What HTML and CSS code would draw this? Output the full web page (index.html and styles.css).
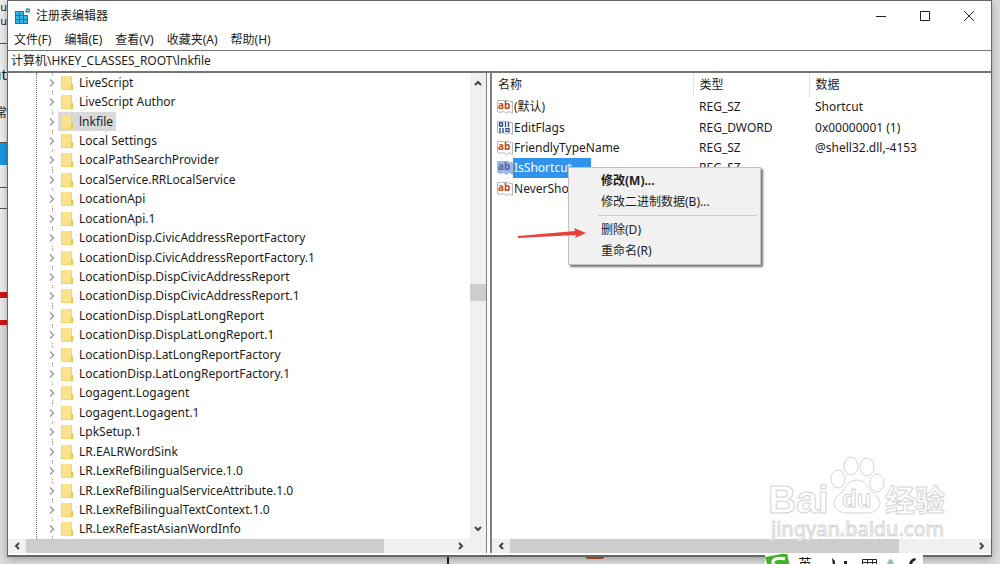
FILE: index.html
```html
<!DOCTYPE html>
<html lang="zh-CN">
<head>
    <meta charset="UTF-8">
    <meta name="viewport" content="width=device-width, initial-scale=1.0">
    <title>注册表编辑器</title>
    <link rel="stylesheet" href="styles.css">
</head>
<body>

    <!-- things that show behind the window -->
    <div class="behind" aria-hidden="true">
        <span class="scrap scrap-white"></span>
        <span class="scrap scrap-text scrap-a">gu<br>gu</span>
        <span class="scrap scrap-text scrap-b">ut</span>
        <span class="scrap scrap-text scrap-c">正常</span>
        <span class="scrap scrap-blue"></span>
        <span class="scrap scrap-box"></span>
        <span class="scrap scrap-red"></span>
        <span class="scrap scrap-line"></span>
        <span class="scrap scrap-orange"></span>
    </div>

    <main class="window">
        <header class="titlebar">
            <svg class="app-icon" width="16" height="16" viewBox="0 0 16 16">
                <path fill="#1478ac" d="M0 3h9v4h4v9H0z"/>
                <path fill="#35b4e8" d="M1 4h3v3H1zM5 4h3v3H5zM1 8h3v3H1zM5 8h3v3H5zM9 8h3v3H9zM1 12h3v3H1zM5 12h3v3H5zM9 12h3v3H9z"/>
                <path fill="#2a91bf" d="M12 0l3 1v3l-3 1-2-2z"/>
                <path fill="#d5f2fc" d="M12 2h2v1h-2z"/>
            </svg>
            <h1 class="title">注册表编辑器</h1>
            <div class="controls">
                <button type="button" aria-label="最小化"><svg width="12" height="12" viewBox="0 0 12 12"><path d="M1 6.5h10"/></svg></button>
                <button type="button" aria-label="最大化"><svg width="12" height="12" viewBox="0 0 12 12"><path d="M1.500 1.500h9v9h-9z"/></svg></button>
                <button type="button" aria-label="关闭"><svg width="12" height="12" viewBox="0 0 12 12"><path d="M1 1l10 10M11 1L1 11"/></svg></button>
            </div>
        </header>

        <nav class="menubar">
            <button type="button">文件(F)</button>
            <button type="button">编辑(E)</button>
            <button type="button">查看(V)</button>
            <button type="button">收藏夹(A)</button>
            <button type="button">帮助(H)</button>
        </nav>

        <input class="address" type="text" aria-label="地址" value="计算机\HKEY_CLASSES_ROOT\lnkfile">

        <div class="panes">
            <section class="pane tree-pane">
                <div class="pane-main">
                    <ul class="tree" id="tree"></ul>
                    <div class="vscroll">
                        <svg width="8" height="6" viewBox="0 0 8 6"><path d="M1 5l3-3 3 3"/></svg>
                        <div class="vtrack"><span class="vthumb"></span></div>
                        <svg width="8" height="6" viewBox="0 0 8 6"><path d="M1 1l3 3 3-3"/></svg>
                    </div>
                </div>
                <div class="hscroll">
                    <svg width="6" height="8" viewBox="0 0 6 8"><path d="M5 1L2 4l3 3"/></svg>
                    <div class="htrack"><span class="hthumb"></span></div>
                    <svg width="6" height="8" viewBox="0 0 6 8"><path d="M1 1l3 3-3 3"/></svg>
                    <span class="corner"></span>
                </div>
            </section>

            <section class="pane list-pane">
                <div class="pane-main">
                    <table class="values">
                        <thead>
                            <tr><th class="col-name">名称</th><th class="col-type">类型</th><th>数据</th></tr>
                        </thead>
                        <tbody>
                            <tr><td><span class="cell"><svg class="icon"><use href="#reg-sz"/></svg><span class="name">(默认)</span></span></td><td>REG_SZ</td><td>Shortcut</td></tr>
                            <tr><td><span class="cell"><svg class="icon"><use href="#reg-bin"/></svg><span class="name">EditFlags</span></span></td><td>REG_DWORD</td><td>0x00000001 (1)</td></tr>
                            <tr><td><span class="cell"><svg class="icon"><use href="#reg-sz"/></svg><span class="name">FriendlyTypeName</span></span></td><td>REG_SZ</td><td>@shell32.dll,-4153</td></tr>
                            <tr class="selected">
                                <td><span class="cell"><svg class="icon"><use href="#reg-sz"/></svg><span class="name">IsShortcut</span></span>
                                    <div class="context-menu">
                                        <button type="button" class="default">修改(M)...</button>
                                        <button type="button">修改二进制数据(B)...</button>
                                        <hr>
                                        <button type="button">删除(D)</button>
                                        <button type="button">重命名(R)</button>
                                        <svg class="arrow" width="70" height="14" viewBox="0 0 70 14"><path d="M1 10L58 5l-1-3 12 5-11 5 1-3L1 12z"/></svg>
                                    </div>
                                </td>
                                <td>REG_SZ</td><td></td>
                            </tr>
                            <tr><td><span class="cell"><svg class="icon"><use href="#reg-sz"/></svg><span class="name">NeverShowExt</span></span></td><td></td><td></td></tr>
                        </tbody>
                    </table>
                </div>
                <div class="hscroll">
                    <svg width="6" height="8" viewBox="0 0 6 8"><path d="M5 1L2 4l3 3"/></svg>
                    <div class="htrack"><span class="hthumb"></span></div>
                    <svg width="6" height="8" viewBox="0 0 6 8"><path d="M1 1l3 3-3 3"/></svg>
                </div>
            </section>
        </div>
    </main>

    <svg class="watermark" width="184" height="90" viewBox="0 0 184 90">
        <g class="outline">
            <text class="mark-latin" x="0" y="56">Bai</text>
            <ellipse cx="70" cy="22" rx="7" ry="9"/>
            <ellipse cx="83" cy="9" rx="7" ry="9"/>
            <ellipse cx="99" cy="10" rx="7" ry="9"/>
            <ellipse cx="109" cy="26" rx="7" ry="9"/>
            <path d="M89 23c-9 0-10 7-16 13-5 5-9 8-6 14 4 7 12 6 22 6s18 1 22-6c3-6-1-9-6-14-6-6-7-13-16-13z"/>
            <text class="mark-du" x="74" y="50">du</text>
            <text class="mark-cjk" x="117" y="54">经验</text>
            <text class="mark-url" x="3" y="79">jingyan.baidu.com</text>
        </g>
    </svg>

    <div class="ime" aria-hidden="true">
        <svg class="ime-logo" width="26" height="14" viewBox="0 0 26 14">
            <path fill="#43b02a" d="M0 4L22 0l3 14H3z"/>
            <path fill="none" stroke="#fff" stroke-width="3" d="M20 6C14 4 7 6 8 10s8 2 12 5"/>
        </svg>
        <span>英</span>
        <svg class="ime-tools" width="100" height="8" viewBox="0 0 100 8">
            <path fill="#223" d="M12 0l3 3v5h-2zM24 3h3v3h-3zM89 8c0-5 2-7 6-8l1 2c-3 1-4 3-4 6z"/>
            <path fill="none" stroke="#223" stroke-width="1" d="M42.500 8V1.500h14V8M42 4.500h15M47.500 2v6M52.500 2v6"/>
            <path fill="#9bc0b2" d="M67 8c0-9 7-9 7 0z"/>
        </svg>
    </div>

    <!-- shared icons -->
    <svg width="0" height="0" class="defs">
        <symbol id="reg-sz" viewBox="0 0 16 16">
            <path class="page" d="M.5 1.500h11l1 1h3v12l-3-2-3 2-3-2-3 1-3-1z"/>
            <text x="1" y="10" class="glyph-ab">ab</text>
        </symbol>
        <symbol id="reg-bin" viewBox="0 0 16 16">
            <path class="page" d="M.5 1.500h11l1 1h3v12l-3-2-3 2-3-2-3 1-3-1z"/>
            <path fill="none" stroke="#24458f" stroke-width="1.300" d="M2.500 3h3v3h-3zM8.500 2v5M11.500 2v5M3 8v5M6 8v5M9 8.700h3v3H9z"/>
        </symbol>
        <symbol id="folder" viewBox="0 0 14 16">
            <path fill="#f5d66d" d="M1 1h11v14H1z"/>
            <path fill="#fce28c" d="M2 1h9v13H2z"/>
            <path fill="#eec44f" d="M11 9h2v6h-2z"/>
        </symbol>
        <symbol id="chevron" viewBox="0 0 6 8">
            <path fill="none" stroke="#a09aa4" stroke-width="1.500" d="M1 .5L4.500 4 1 7.500"/>
        </symbol>
    </svg>

    <script>
        const keys = [
            "LiveScript", "LiveScript Author", "lnkfile", "Local Settings",
            "LocalPathSearchProvider", "LocalService.RRLocalService",
            "LocationApi", "LocationApi.1",
            "LocationDisp.CivicAddressReportFactory", "LocationDisp.CivicAddressReportFactory.1",
            "LocationDisp.DispCivicAddressReport", "LocationDisp.DispCivicAddressReport.1",
            "LocationDisp.DispLatLongReport", "LocationDisp.DispLatLongReport.1",
            "LocationDisp.LatLongReportFactory", "LocationDisp.LatLongReportFactory.1",
            "Logagent.Logagent", "Logagent.Logagent.1", "LpkSetup.1", "LR.EALRWordSink",
            "LR.LexRefBilingualService.1.0", "LR.LexRefBilingualServiceAttribute.1.0",
            "LR.LexRefBilingualTextContext.1.0", "LR.LexRefEastAsianWordInfo"
        ];

        document.getElementById("tree").innerHTML = keys.map(key => `
            <li class="${key === "lnkfile" ? "current" : ""}">
                <span class="toggle"><svg class="chevron"><use href="#chevron"/></svg></span>
                <span class="key"><svg class="folder"><use href="#folder"/></svg>${key}</span>
            </li>`).join("");
    </script>

</body>
</html>
```
FILE: styles.css
```css
* { box-sizing: border-box; }
body { margin: 0; min-height: 100vh; padding: 0 8px 7px 7px; background: #dcdcde; overflow: hidden; color: #1c1c1c; font: 12px/18px "Noto Sans", "Noto Sans CJK SC", sans-serif; }
button { padding: 0; border: none; background: none; color: inherit; font: inherit; }
svg { flex: none; }

/* behind the window */
.scrap { position: absolute; overflow: hidden; }
.scrap-white { left: 0; top: 0; width: 7px; height: 320px; background: #eeeeef; }
.scrap-text { left: 0; width: 7px; white-space: nowrap; display: flex; justify-content: flex-end; }
.scrap-a { top: 0; height: 44px; font-size: 11px; line-height: 14px; border-bottom: 1px solid #555; }
.scrap-b { top: 65px; height: 22px; font-size: 15px; }
.scrap-c { top: 104px; height: 18px; }
.scrap-blue { left: 0; top: 142px; width: 7px; height: 23px; background: #1d97e4; border-top: 1px solid #555; }
.scrap-box { left: 0; top: 187px; width: 7px; height: 22px; border: solid #555; border-width: 1px 0; }
.scrap-red { left: 0; top: 292px; width: 7px; height: 33px; background: #eee; border: solid #d01616; border-width: 6px 0 5px; }
.scrap-line { left: 447px; bottom: 0; width: 2px; height: 8px; background: #222; }
.scrap-orange { left: 585px; bottom: 5px; width: 20px; height: 4px; background: #b4532d; border-radius: 0 0 5px 5px; }

.window { position: relative; display: flex; flex-direction: column; height: calc(100vh - 7px); background: #fff; border: 1px solid #666; border-bottom-width: 2px; box-shadow: 0 2px 8px rgba(0, 0, 0, 0.3); }
.titlebar { display: flex; align-items: center; height: 29px; padding-left: 7px; }
.title { flex: 1; margin: 0 0 0 5px; font-size: 12px; font-weight: normal; }
.controls { display: flex; }
.controls button { display: flex; align-items: center; justify-content: center; width: 44px; height: 28px; }
.controls svg { fill: none; stroke: #222; }

.menubar { display: flex; gap: 13px; height: 20px; padding-left: 6px; }
.address { flex: none; width: 100%; height: 23px; padding: 0 3px 2px; border: 1px solid #777; border-width: 1px 0 2px; outline: none; background: #fff; color: inherit; font: inherit; }

.panes { display: flex; flex: 1; gap: 3px; min-height: 0; padding-bottom: 2px; }
.pane { display: flex; flex-direction: column; min-width: 0; }
.tree-pane { flex: 479; border-right: 1px solid #808088; }
.list-pane { flex: 500; border-left: 2px solid #808088; }
.pane-main { display: flex; flex: 1; min-height: 0; }

.tree { flex: 1; display: flex; flex-direction: column; margin: 0 0 0 28px; padding: 0; list-style: none; border-left: 1px dotted #777; }
.tree li { flex: 1; display: flex; align-items: center; min-height: 0; padding-left: 12px; }
.toggle { display: flex; align-items: center; align-self: stretch; width: 6px; background: linear-gradient(#fff, #fff) center / 100% 14px no-repeat, repeating-linear-gradient(#999 0 1px, transparent 1px 2px) 3px 0 / 1px 100% no-repeat; }
.chevron { width: 6px; height: 8px; }
.key { display: flex; align-items: center; height: 19px; margin-left: 3px; padding: 0 3px 0 2px; }
.folder { width: 14px; height: 16px; margin-right: 5px; }
.current .key { background: #d9d9d9; }

.vscroll { display: flex; flex-direction: column; align-items: center; width: 16px; padding: 7px 0; background: #f0f0f0; }
.vtrack { flex: 1; width: 100%; }
.vthumb { display: block; height: 17px; margin-top: 198px; background: #cdcdcd; }
.hscroll { display: flex; align-items: center; height: 14px; padding: 0 6px; background: #f0f0f0; }
.htrack { flex: 1; height: 100%; padding: 0 6px; }
.hthumb { display: block; width: 84%; height: 100%; background: #cdcdcd; }
.corner { width: 16px; }
.vscroll > svg, .hscroll > svg { fill: none; stroke: #444; stroke-width: 2; }

.values { width: 100%; height: 126px; border-collapse: collapse; table-layout: fixed; }
.values th, .values td { position: relative; height: 20px; padding: 0 0 0 6px; text-align: left; font-weight: normal; white-space: nowrap; }
.values th { height: 24px; border-right: 1px solid #e2e2e2; }
.values th:last-child { border: none; }
.values .col-name { width: 201px; }
.values .col-type { width: 116px; }
.values td:first-child { padding-left: 5px; }
.cell { display: flex; align-items: center; }
.icon { width: 16px; height: 16px; --page: #fff; --ab: #c2461d; }
.name { height: 20px; padding: 1px; }
.page { fill: var(--page); stroke: #b5b5bd; }
.glyph-ab { fill: var(--ab); font: bold 10px "Open Sans", sans-serif; }
.selected .icon { --page: #8fbdf0; --ab: #6a5a9c; }
.selected .name { width: 78px; background: #3093ee; color: #fff; }

.context-menu { position: absolute; z-index: 1; left: 76px; top: 9px; width: 193px; padding: 2px 3px 3px 29px; background: #f1f1f1; border: 1px solid #c4c4c4; box-shadow: 2px 2px 2px rgba(0, 0, 0, 0.55); }
.context-menu button { display: block; width: 100%; height: 21px; padding-left: 3px; text-align: left; }
.context-menu .default { font-weight: bold; }
.context-menu hr { height: 1px; margin: 3px 0; border: none; background: #ccc; }
.arrow { position: absolute; left: -52px; top: 58px; fill: #e8403a; }

.watermark { position: absolute; right: 48px; bottom: 17px; overflow: visible; }
.outline { fill: #fff; stroke: #d4d4d4; stroke-width: 1; }
.mark-latin { font: bold 39px "Liberation Sans", sans-serif; }
.mark-du { font: bold 24px "Liberation Sans", sans-serif; }
.mark-cjk { font: bold 30px "Noto Sans CJK SC", sans-serif; }
.mark-url { font: 20px "Noto Sans", sans-serif; }

.ime { position: absolute; left: 765px; bottom: 0; display: flex; gap: 8px; width: 158px; height: 10px; padding-left: 33px; background: #fff; font-size: 14px; line-height: 20px; overflow: hidden; }
.ime-logo { position: absolute; left: 0; bottom: -3px; }
.ime-tools { margin-top: 4px; }
.defs { position: absolute; }
```
